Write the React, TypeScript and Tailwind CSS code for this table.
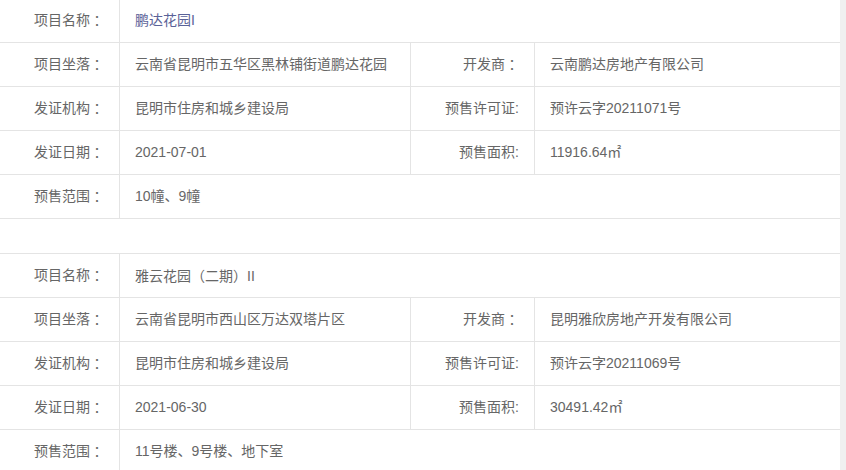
import React from 'react';

type Project = {
  name: React.ReactNode;
  nameColor: string;
  location: string;
  developer: string;
  agency: string;
  permit: string;
  date: string;
  area: string;
  scope: string;
};

// full-width punctuation sits centred in its box, as in the source page
const centred = "font-['Noto_Sans_CJK_TC','Noto_Sans_CJK_SC',sans-serif]";
const Colon = () => <span className={centred}>：</span>;

const projects: Project[] = [
  {
    name: '鹏达花园I',
    nameColor: 'text-[#5a6298]',
    location: '云南省昆明市五华区黑林铺街道鹏达花园',
    developer: '云南鹏达房地产有限公司',
    agency: '昆明市住房和城乡建设局',
    permit: '预许云字20211071号',
    date: '2021-07-01',
    area: '11916.64㎡',
    scope: '10幢、9幢',
  },
  {
    name: (
      <>
        雅云花园<span className={centred}>（</span>二期<span className={centred}>）</span>II
      </>
    ),
    nameColor: 'text-[#666]',
    location: '云南省昆明市西山区万达双塔片区',
    developer: '昆明雅欣房地产开发有限公司',
    agency: '昆明市住房和城乡建设局',
    permit: '预许云字20211069号',
    date: '2021-06-30',
    area: '30491.42㎡',
    scope: '11号楼、9号楼、地下室',
  },
];

// ─── cells ───────────────────────────────────────────
function Label({ children, wide }: { children: React.ReactNode; wide?: boolean }) {
  return (
    <div
      className={`${wide ? 'w-[124px]' : 'w-[120px]'} shrink-0 flex items-center justify-end pr-[15px] border-r border-[#e4e4e4]`}
    >
      {children}
    </div>
  );
}

function Value({ children, className = '' }: { children: React.ReactNode; className?: string }) {
  return <div className={`flex items-center pl-[15px] ${className}`}>{children}</div>;
}

function Row({ children }: { children: React.ReactNode }) {
  return <div className="flex h-[44px] border-b border-[#e4e4e4]">{children}</div>;
}

function ProjectTable({ p, className = '' }: { p: Project; className?: string }) {
  return (
    <div className={`border-t border-[#e4e4e4] ${className}`}>
      <Row>
        <Label>项目名称<Colon /></Label>
        <Value className={`flex-1 ${p.nameColor}`}><span>{p.name}</span></Value>
      </Row>
      <Row>
        <Label>项目坐落<Colon /></Label>
        <Value className="w-[291px] border-r border-[#e4e4e4]">{p.location}</Value>
        <Label wide>开发商<Colon /></Label>
        <Value className="flex-1">{p.developer}</Value>
      </Row>
      <Row>
        <Label>发证机构<Colon /></Label>
        <Value className="w-[291px] border-r border-[#e4e4e4]">{p.agency}</Value>
        <Label wide>预售许可证:</Label>
        <Value className="flex-1">{p.permit}</Value>
      </Row>
      <Row>
        <Label>发证日期<Colon /></Label>
        <Value className="w-[291px] border-r border-[#e4e4e4]">{p.date}</Value>
        <Label wide>预售面积:</Label>
        <Value className="flex-1">{p.area}</Value>
      </Row>
      <Row>
        <Label>预售范围<Colon /></Label>
        <Value className="flex-1">{p.scope}</Value>
      </Row>
    </div>
  );
}

export default function App() {
  return (
    <div
      className="flex h-[470px] overflow-hidden bg-[#f0f0f0] text-[14px] text-[#666]"
      style={{ fontFamily: '"Liberation Sans", "Noto Sans CJK SC", sans-serif' }}
    >
      <div className="w-[840px] shrink-0 bg-white">
        <ProjectTable p={projects[0]} className="-mt-[2px]" />
        <ProjectTable p={projects[1]} className="mt-[34px]" />
      </div>
      <div className="flex-1" />
    </div>
  );
}
